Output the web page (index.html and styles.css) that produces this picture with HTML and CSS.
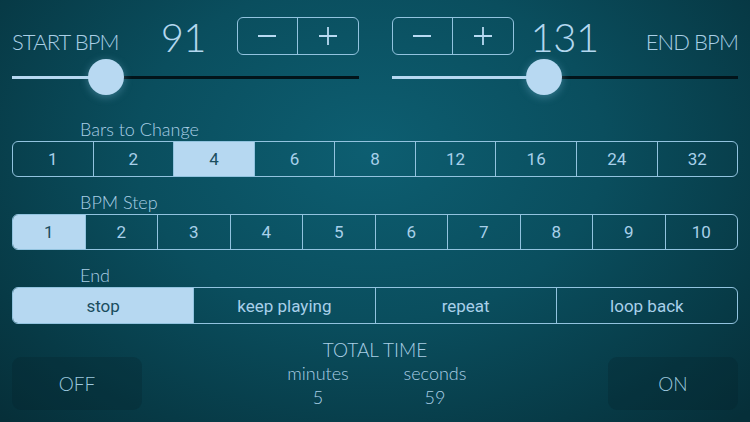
FILE: index.html
```html
<!DOCTYPE html>
<html lang="en">
<head>
    <meta charset="UTF-8">
    <meta name="viewport" content="width=device-width, initial-scale=1.0">
    <title>BPM Ramp</title>
    <link rel="stylesheet" href="styles.css">
</head>
<body>
    <div class="app">
        <div class="tempo-row">
            <div class="tempo">
                <div class="tempo-head">
                    <span class="tempo-label">START BPM</span>
                    <span class="tempo-value left-value">91</span>
                    <div class="stepper left-stepper">
                        <button class="step"><svg width="20" height="20" viewBox="0 0 20 20"><line x1="1" y1="10" x2="19" y2="10"/></svg></button>
                        <button class="step"><svg width="20" height="20" viewBox="0 0 20 20"><line x1="1" y1="10" x2="19" y2="10"/><line x1="10" y1="1" x2="10" y2="19"/></svg></button>
                    </div>
                </div>
                <div class="slider">
                    <div class="track"></div>
                    <div class="fill" style="width: 27%"></div>
                    <div class="thumb" style="left: 27%"></div>
                </div>
            </div>
            <div class="tempo">
                <div class="tempo-head">
                    <div class="stepper">
                        <button class="step"><svg width="20" height="20" viewBox="0 0 20 20"><line x1="1" y1="10" x2="19" y2="10"/></svg></button>
                        <button class="step"><svg width="20" height="20" viewBox="0 0 20 20"><line x1="1" y1="10" x2="19" y2="10"/><line x1="10" y1="1" x2="10" y2="19"/></svg></button>
                    </div>
                    <span class="tempo-value right-value">131</span>
                    <span class="tempo-label end-label">END BPM</span>
                </div>
                <div class="slider">
                    <div class="track"></div>
                    <div class="fill" style="width: 44%"></div>
                    <div class="thumb" style="left: 44%"></div>
                </div>
            </div>
        </div>

        <div class="group-label first-label">Bars to Change</div>
        <div class="segmented">
            <div class="seg">1</div>
            <div class="seg">2</div>
            <div class="seg active">4</div>
            <div class="seg">6</div>
            <div class="seg">8</div>
            <div class="seg">12</div>
            <div class="seg">16</div>
            <div class="seg">24</div>
            <div class="seg">32</div>
        </div>

        <div class="group-label">BPM Step</div>
        <div class="segmented">
            <div class="seg active">1</div>
            <div class="seg">2</div>
            <div class="seg">3</div>
            <div class="seg">4</div>
            <div class="seg">5</div>
            <div class="seg">6</div>
            <div class="seg">7</div>
            <div class="seg">8</div>
            <div class="seg">9</div>
            <div class="seg">10</div>
        </div>

        <div class="group-label">End</div>
        <div class="segmented tall">
            <div class="seg active">stop</div>
            <div class="seg">keep playing</div>
            <div class="seg">repeat</div>
            <div class="seg">loop back</div>
        </div>

        <div class="bottom-row">
            <button class="toggle">OFF</button>
            <div class="total">
                <div class="total-title">TOTAL TIME</div>
                <div class="total-cols">
                    <div class="total-col">
                        <div>minutes</div>
                        <div>5</div>
                    </div>
                    <div class="total-col">
                        <div>seconds</div>
                        <div>59</div>
                    </div>
                </div>
            </div>
            <button class="toggle">ON</button>
        </div>
    </div>
</body>
</html>
```

FILE: styles.css
```css
html, body {
    margin: 0;
    height: 100%;
}

body {
    width: 750px;
    height: 422px;
    overflow: hidden;
    font-family: Lato, "Open Sans", sans-serif;
    font-weight: 300;
    color: #b3d7ef;
    background: radial-gradient(ellipse 520px 380px at 370px 150px, #0d5e71 0%, #0a4e5e 45%, #073a46 80%, #062f39 100%);
}

.app {
    padding: 0 12px;
}

.tempo-row {
    display: grid;
    grid-template-columns: 1fr 1fr;
    column-gap: 33px;
}

.tempo-head {
    display: flex;
    align-items: flex-end;
    height: 55px;
}

.tempo-label {
    white-space: nowrap;
    font-size: 22px;
    line-height: 22px;
    letter-spacing: -0.9px;
    margin-bottom: 2px;
    color: #a9cfe6;
}

.end-label {
    margin-left: auto;
}

.tempo-value {
    font-size: 40px;
    line-height: 40px;
    letter-spacing: -0.5px;
    color: #b3d7ef;
    margin-bottom: -2px;
}

.left-value {
    margin-left: 42px;
}

.left-stepper {
    margin-left: auto;
}

.right-value {
    margin-left: 17px;
}

.stepper {
    display: flex;
    width: 122px;
    height: 38px;
    box-sizing: border-box;
    border: 1.5px solid #92c3df;
    border-radius: 6px;
    overflow: hidden;
}

.step {
    flex: 1;
    background: none;
    border: none;
    padding: 0;
    display: flex;
    align-items: center;
    justify-content: center;
}

.step + .step {
    border-left: 1.5px solid #92c3df;
}

.step svg {
    stroke: #b8daf2;
    stroke-width: 1.8;
}

.slider {
    position: relative;
    height: 42px;
}

.track {
    position: absolute;
    left: 0;
    right: 0;
    top: 21px;
    height: 3px;
    background: #02141a;
}

.fill {
    position: absolute;
    left: 0;
    top: 21px;
    height: 3px;
    background: #b6d8f1;
}

.thumb {
    position: absolute;
    top: 4px;
    width: 36px;
    height: 36px;
    margin-left: -18px;
    border-radius: 50%;
    background: #b8d9f2;
    box-shadow: 0 2px 8px rgba(150, 210, 240, 0.35);
}

.group-label {
    margin-left: 68px;
    margin-top: 14px;
    font-size: 18px;
    line-height: 23px;
    color: #a9cfe6;
}

.first-label {
    margin-top: 21px;
}

.segmented {
    display: flex;
    height: 36px;
    box-sizing: border-box;
    border: 1.5px solid #92c3df;
    border-radius: 6px;
    overflow: hidden;
}

.segmented.tall {
    height: 37px;
}

.seg {
    flex: 1;
    display: flex;
    align-items: center;
    justify-content: center;
    font-family: Roboto, Inter, sans-serif;
    font-weight: 400;
    font-size: 17px;
    color: #a8d0ea;
}

.seg + .seg {
    border-left: 1.5px solid #92c3df;
}

.seg.active {
    background: #b6d8f1;
    color: #1a4d5e;
}

.bottom-row {
    display: grid;
    grid-template-columns: 130px 1fr 130px;
    margin-top: 15px;
}

.toggle {
    margin-top: 18px;
    height: 53px;
    border: none;
    border-radius: 9px;
    background: rgba(2, 30, 38, 0.25);
    font-family: Lato, "Open Sans", sans-serif;
    font-weight: 300;
    font-size: 19px;
    color: #9cc8de;
}

.total {
    text-align: center;
    color: #a9cfe6;
}

.total-title {
    font-size: 19px;
    line-height: 22px;
}

.total-cols {
    display: flex;
    justify-content: center;
    gap: 52px;
    font-size: 18px;
    line-height: 24px;
    margin-left: 3px;
}

.total-col {
    width: 65px;
}
```
